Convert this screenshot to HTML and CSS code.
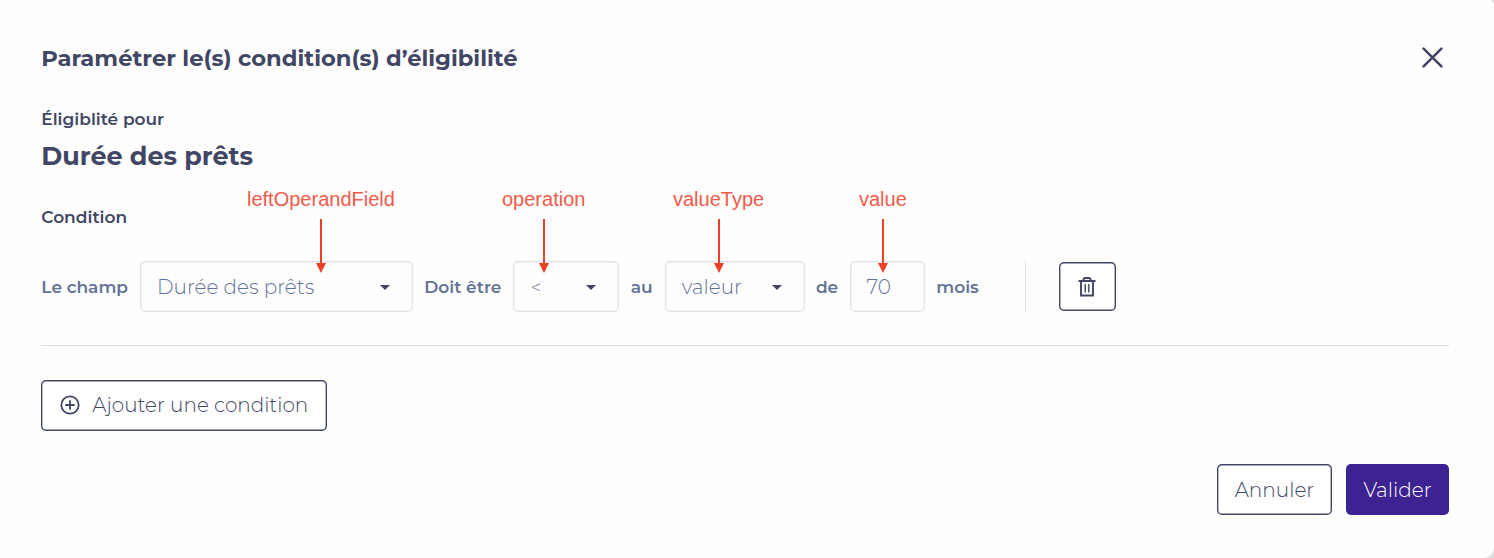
FILE: index.html
```html
<!DOCTYPE html>
<html lang="fr">
<head>
<meta charset="utf-8">
<title>Conditions d’éligibilité</title>
<link rel="stylesheet" href="styles.css">
</head>
<body>
<main class="dialog">
  <header class="dialog-header">
    <h1 class="title">Paramétrer le(s) condition(s) d’éligibilité</h1>
    <svg class="close" viewBox="0 0 20 20"><path d="M1.500 1.500 18.500 18.500M18.500 1.500 1.500 18.500"/></svg>
  </header>
  <p class="label eligibility">Éligiblité pour</p>
  <h2 class="subject">Durée des prêts</h2>
  <p class="label condition">Condition</p>
  <section class="row">
    <span class="word">Le champ</span>
    <div class="field field-name"><span>Durée des prêts</span><i class="caret"></i></div>
    <span class="word">Doit être</span>
    <div class="field field-op"><span class="operator">&lt;</span><i class="caret"></i></div>
    <span class="word">au</span>
    <div class="field field-type"><span>valeur</span><i class="caret"></i></div>
    <span class="word">de</span>
    <div class="field field-value"><span>70</span></div>
    <span class="word">mois</span>
    <i class="separator"></i>
    <button class="trash" aria-label="Supprimer"><svg viewBox="0 0 18 20"><path d="M.5 4h17M5.500 4V2.600Q5.500 1 7 1h4q1.500 0 1.500 1.600V4M3 4v14.500h12V4"/><path class="bars" d="M7.200 7v8.500M10.800 7v8.500"/></svg></button>
  </section>
  <button class="add"><svg viewBox="0 0 20 20"><circle cx="10" cy="10" r="8.700"/><path d="M10 5.300v9.400M5.300 10h9.400"/></svg><span>Ajouter une condition</span></button>
  <footer class="actions">
    <button class="cancel">Annuler</button>
    <button class="submit">Valider</button>
  </footer>
  <div class="note note-field">leftOperandField</div>
  <div class="note note-op">operation</div>
  <div class="note note-type">valueType</div>
  <div class="note note-value">value</div>
  <svg class="arrow arrow-field" viewBox="0 0 10 54"><path d="M4 0h2v44h4L5 54 0 44h4z"/></svg>
  <svg class="arrow arrow-op" viewBox="0 0 10 54"><path d="M4 0h2v44h4L5 54 0 44h4z"/></svg>
  <svg class="arrow arrow-type" viewBox="0 0 10 54"><path d="M4 0h2v44h4L5 54 0 44h4z"/></svg>
  <svg class="arrow arrow-value" viewBox="0 0 10 54"><path d="M4 0h2v44h4L5 54 0 44h4z"/></svg>
</main>
</body>
</html>
```
FILE: styles.css
```css
* { box-sizing: border-box; }
body { margin: 0; background: #dedede; color: #414664; font-family: Montserrat, Inter, sans-serif; }
.dialog { position: relative; display: flex; flex-direction: column; height: 558px; padding: 38px 45px 0 41.3px; background: #fefefe; border-radius: 0 5px 10px 0; overflow: hidden; }
.dialog-header { display: flex; justify-content: space-between; align-items: center; height: 40px; padding-right: 6.500px; }
h1, h2, p { margin: 0; white-space: nowrap; }
button { display: flex; align-items: center; justify-content: center; padding: 0; border: 0; border-radius: 5px; background: #fff; box-shadow: inset 0 0 0 1.400px #414664; color: inherit; font: inherit; }
svg { flex: none; fill: none; stroke: currentColor; }
.title { font-size: 22.650px; font-weight: 700; line-height: 39px; }
.close { width: 21px; height: 21px; margin-top: -2px; stroke-width: 2.400; stroke-linecap: round; }
.label { font-size: 17px; font-weight: 600; line-height: 24px; }
.eligibility { margin-top: 29px; }
.subject { margin-top: 9px; font-size: 25.450px; font-weight: 700; line-height: 32px; }
.condition { margin-top: 33px; }
.row { display: flex; align-items: center; height: 85px; margin-top: 32px; padding-bottom: 33px; border-bottom: 1px solid #dedee6; white-space: nowrap; }
.word { flex: none; padding-top: 1px; color: #637396; font-size: 17px; font-weight: 600; }
.field { display: flex; align-items: center; justify-content: space-between; height: 51px; margin: 0 11.300px 0 12px; padding: 1px 23px 0 17px; border-radius: 5px; box-shadow: inset 0 0 0 1.400px #e3e3eb; color: #637396; font-size: 20px; font-weight: 300; }
.field-name { width: 273px; }
.field-op { width: 106px; }
.field-type { width: 140px; }
.field-value { width: 75.500px; margin-left: 11.300px; }
.operator { font-size: 19px; }
.caret { width: 0; height: 0; border: 5px solid transparent; border-top-color: #414664; border-bottom: 0; }
.separator { width: 1.300px; height: 51px; margin: 0 33px 0 auto; background: #dedee6; }
.trash { width: 56.500px; height: 48.500px; margin-right: 333.500px; }
.trash svg { width: 18px; height: 20px; stroke-width: 1.900; }
.trash .bars { stroke-width: 1.400; }
.add { width: 286px; height: 51px; margin-top: 33.500px; gap: 12px; font-size: 20px; font-weight: 300; }
.add svg { width: 20px; height: 20px; stroke-width: 1.800; }
.actions { display: flex; justify-content: flex-end; gap: 14px; margin-top: 33.900px; font-size: 20px; font-weight: 300; }
.cancel { width: 115px; height: 51px; }
.submit { width: 103px; height: 51px; background: #3c2391; box-shadow: none; color: #fff; }
.note { position: absolute; top: 187px; color: #f15a4a; font: 20px/24px "Liberation Sans", sans-serif; }
.note-field { left: 247px; }
.note-op { left: 502px; }
.note-type { left: 673px; }
.note-value { left: 859px; }
.arrow { position: absolute; top: 219px; width: 10px; height: 54px; fill: #ee4026; stroke: none; }
.arrow-field { left: 316px; }
.arrow-op { left: 539px; }
.arrow-type { left: 714px; }
.arrow-value { left: 878px; }
```
